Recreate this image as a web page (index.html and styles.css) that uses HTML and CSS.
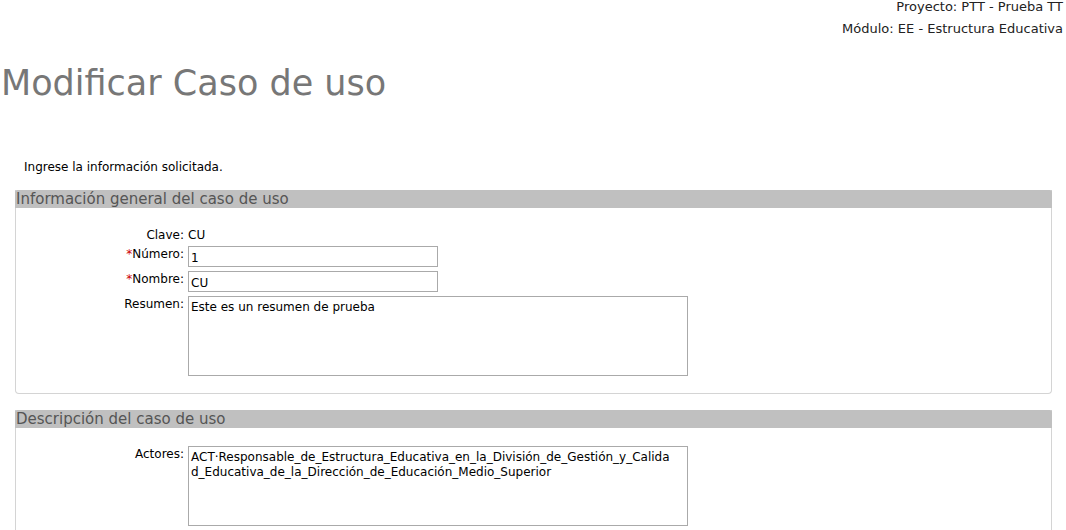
FILE: index.html
```html
<!DOCTYPE html>
<html>
<head>
<meta charset="utf-8">
<link rel="stylesheet" href="styles.css">
</head>
<body>
<div class="context">
  <div class="context-line">Proyecto: PTT - Prueba TT</div>
  <div class="context-line second">Módulo: EE - Estructura Educativa</div>
</div>
<h1 class="title">Modificar Caso de uso</h1>
<p class="instructions">Ingrese la información solicitada.</p>
<div class="panel">
  <div class="panel-head">Información general del caso de uso</div>
  <div class="form-grid">
    <div class="label">Clave:</div>
    <div class="value">CU</div>
    <div class="label"><span class="req">*</span>Número:</div>
    <div><input class="field" type="text" value="1"></div>
    <div class="label"><span class="req">*</span>Nombre:</div>
    <div><input class="field" type="text" value="CU"></div>
    <div class="label">Resumen:</div>
    <div><textarea class="area">Este es un resumen de prueba</textarea></div>
  </div>
</div>
<div class="panel">
  <div class="panel-head">Descripción del caso de uso</div>
  <div class="form-grid first-gap">
    <div class="label">Actores:</div>
    <div><textarea class="area">ACT·Responsable_de_Estructura_Educativa_en_la_División_de_Gestión_y_Calidad_Educativa_de_la_Dirección_de_Educación_Medio_Superior</textarea></div>
  </div>
</div>
</body>
</html>
```
FILE: styles.css
```css
* { box-sizing: border-box; }
html, body { margin: 0; padding: 0; background: #fff; }
body {
  font-family: "DejaVu Sans", Verdana, sans-serif;
  font-size: 12px;
  color: #000;
  width: 1066px;
  overflow: hidden;
}
.context {
  text-align: right;
  padding-right: 3px;
  font-size: 13px;
  color: #222;
}
.context-line { line-height: 14px; }
.context-line.second { margin-top: 8px; }
.title {
  margin: 26px 0 0 1px;
  font-size: 35px;
  font-weight: normal;
  color: #777;
  line-height: 42px;
}
.instructions {
  margin: 56px 0 0 24px;
  line-height: 14px;
  font-size: 12px;
}
.panel {
  margin: 16px 15px 0 15px;
  border: 1px solid #d4d4d4;
  border-top: none;
  border-radius: 0 0 4px 4px;
  padding-bottom: 17px;
  width: 1037px;
}
.panel-head {
  background: #c0c0c0;
  color: #555;
  font-size: 15px;
  line-height: 17px;
  height: 18px;
  padding: 1px 0 0 1px;
  margin: 0 -1px 0 -1px;
  border-radius: 2px 2px 0 0;
}
.form-grid {
  display: grid;
  grid-template-columns: 168px auto;
  column-gap: 4px;
  row-gap: 4px;
  padding-top: 19px;
}
.form-grid.first-gap { padding-top: 18px; }
.label {
  text-align: right;
  line-height: 14px;
  padding-top: 1px;
}
.value { line-height: 14px; padding-top: 1px; }
.req { color: #c00; }
.field {
  display: block;
  width: 250px;
  height: 21px;
  border: 1px solid #aaa;
  font: inherit;
  font-size: 12px;
  padding: 2px 2px 0;
  margin: 0;
  color: #000;
}
.area {
  display: block;
  width: 500px;
  height: 80px;
  border: 1px solid #aaa;
  font: inherit;
  font-size: 12px;
  line-height: 15px;
  padding: 3px 14px 3px 2px;
  margin: 0;
  resize: none;
  color: #000;
  overflow: hidden;
}
```
